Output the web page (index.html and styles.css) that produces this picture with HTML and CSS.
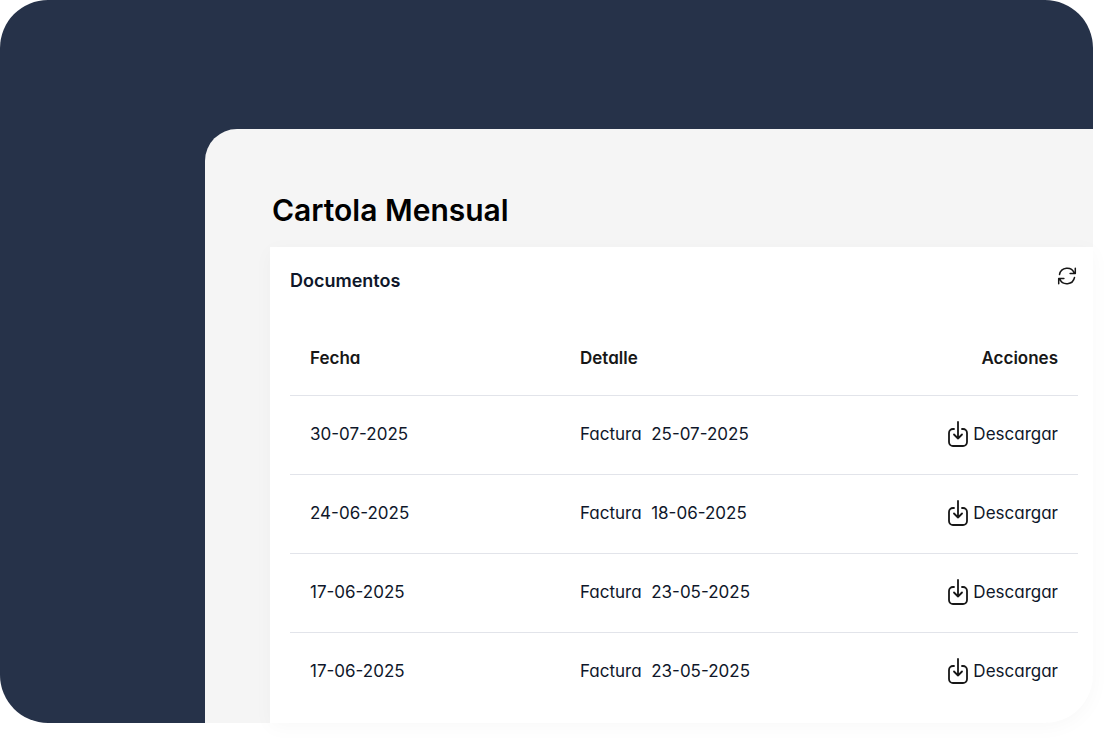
FILE: index.html
```
<!DOCTYPE html>
<html lang="es">
<head>
    <meta charset="UTF-8">
    <meta name="viewport" content="width=device-width, initial-scale=1.0">
    <title>Cartola Mensual</title>
    <link rel="stylesheet" href="styles.css">
</head>
<body>
    <svg class="sprite" aria-hidden="true">
        <symbol id="download" viewBox="0 0 20 26">
            <path d="M6 8H5a4 4 0 0 0-4 4v9a4 4 0 0 0 4 4h10a4 4 0 0 0 4-4v-9a4 4 0 0 0-4-4h-1" />
            <path d="M10 1v16.500M6 13.500l4 4 4-4" />
        </symbol>
    </svg>
    <div class="stage">
        <main class="panel">
            <h1>Cartola Mensual</h1>
            <section class="card">
                <div class="card-header">
                    <h2>Documentos</h2>
                    <button type="button" class="refresh" aria-label="Actualizar">
                        <svg viewBox="0 0 20 20">
                            <path d="M2.500 8.500A7.800 7.800 0 0 1 17.300 7M18.300 2.300v5.200h-5.200" />
                            <path d="M17.500 11.500A7.800 7.800 0 0 1 2.700 13M1.700 17.700v-5.200h5.200" />
                        </svg>
                    </button>
                </div>
                <table>
                    <thead>
                        <tr>
                            <th class="fecha">Fecha</th>
                            <th>Detalle</th>
                            <th class="acciones">Acciones</th>
                        </tr>
                    </thead>
                    <tbody>
                        <tr>
                            <td>30-07-2025</td>
                            <td>Factura&nbsp; 25-07-2025</td>
                            <td class="acciones"><a href="#" class="download"><svg><use href="#download" /></svg>Descargar</a></td>
                        </tr>
                        <tr>
                            <td>24-06-2025</td>
                            <td>Factura&nbsp; 18-06-2025</td>
                            <td class="acciones"><a href="#" class="download"><svg><use href="#download" /></svg>Descargar</a></td>
                        </tr>
                        <tr>
                            <td>17-06-2025</td>
                            <td>Factura&nbsp; 23-05-2025</td>
                            <td class="acciones"><a href="#" class="download"><svg><use href="#download" /></svg>Descargar</a></td>
                        </tr>
                        <tr>
                            <td>17-06-2025</td>
                            <td>Factura&nbsp; 23-05-2025</td>
                            <td class="acciones"><a href="#" class="download"><svg><use href="#download" /></svg>Descargar</a></td>
                        </tr>
                    </tbody>
                </table>
            </section>
        </main>
    </div>
</body>
</html>
```

FILE: styles.css
```
* {
    box-sizing: border-box;
}

body {
    margin: 0;
    padding: 0 13px 20px 0;
    background-color: white;
    color: #0f172a;
    font-family: Inter, "Liberation Sans", sans-serif;
}

.sprite {
    display: none;
}

.stage {
    padding: 129px 0 0 205px;
    border-radius: 48px 48px 56px 48px;
    background-color: #263249;
}

.panel {
    padding: 61px 0 0 65px;
    border-radius: 32px 0 52px 0;
    background-color: #f5f5f5;
}

h1 {
    margin: 0;
    padding: 0 2px 17px;
    color: black;
    font-size: 30px;
    font-weight: 600;
    line-height: 40px;
}

.card {
    padding: 19px 15px 12px 20px;
    border-radius: 0 0 48px 0;
    background-color: white;
    box-shadow: 0 4px 20px rgba(0, 0, 0, 0.03);
}

.card-header {
    display: flex;
    justify-content: space-between;
    align-items: flex-start;
    height: 55px;
}

h2 {
    margin: 0;
    font-size: 18px;
    font-weight: 600;
    line-height: 30px;
}

.refresh {
    padding: 0 1px;
    border: 0;
    background: none;
    color: #171717;
    cursor: pointer;
}

svg {
    display: block;
    fill: none;
    stroke: currentColor;
    stroke-linecap: round;
    stroke-linejoin: round;
}

.refresh svg {
    width: 20px;
    height: 20px;
    stroke-width: 1.500;
}

table {
    width: 100%;
    border-collapse: collapse;
    font-size: 17px;
    line-height: 24px;
    font-feature-settings: "cv11";
}

th,
td {
    padding: 0 20px;
    text-align: left;
}

th {
    height: 74px;
    color: #171717;
    font-weight: 600;
}

td {
    height: 79px;
    padding-bottom: 2px;
    border-top: 1px solid #e2e4ea;
}

.fecha {
    width: 270px;
}

.acciones {
    text-align: right;
}

.download {
    display: flex;
    justify-content: flex-end;
    align-items: center;
    gap: 5px;
    color: inherit;
    text-decoration: none;
}

.download svg {
    width: 20px;
    height: 26px;
    color: #171717;
    stroke-width: 1.800;
}
```
